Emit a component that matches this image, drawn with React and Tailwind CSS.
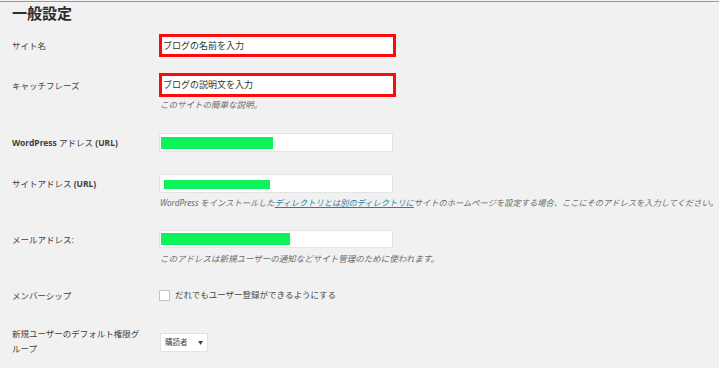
const font = { fontFamily: '"Noto Sans", "Noto Sans CJK JP", sans-serif' };

const Label = ({ children }) => (
  <div className="w-[159px] shrink-0 pl-[12px] text-[8.5px] leading-[15px] font-normal text-[#3f3f3f]">
    {children}
  </div>
);

const RedInput = ({ value }) => (
  <div className="w-[237px] h-full border-[3px] border-[#ff0a0a] bg-white pl-[1px] flex items-center text-[9px] text-[#333]">
    {value}
  </div>
);

const MaskedInput = ({ barClass }) => (
  <div className="w-[234px] h-full border border-[#e4e4e4] bg-white flex items-start">
    <div className={barClass}></div>
  </div>
);

const Desc = ({ children, className = "" }) => (
  <div className={"pl-[160px] leading-[12px] italic text-[#6b6b6b] whitespace-nowrap " + className}>
    {children}
  </div>
);

export default function App() {
  return (
    <div className="w-[719px] h-[368px] bg-[#f1f1f1] overflow-hidden" style={font}>
      <div className="pt-px">
        <div className="h-px bg-[#9a9a9a]"></div>
      </div>

      <h1 className="h-[22px] pl-[12px] text-[15px] leading-[22px] font-semibold text-[#2a2e33]">
        一般設定
      </h1>

      {/* サイト名 */}
      <div className="mt-[10px] h-[23px] flex items-center">
        <Label>サイト名</Label>
        <RedInput value="ブログの名前を入力" />
      </div>

      {/* キャッチフレーズ */}
      <div className="mt-[16px] h-[24px] flex items-center">
        <Label>キャッチフレーズ</Label>
        <RedInput value="ブログの説明文を入力" />
      </div>
      <Desc className="mt-[2px] text-[8.5px]">このサイトの簡単な説明。</Desc>

      {/* WordPress アドレス */}
      <div className="mt-[22px] h-[19px] flex items-center">
        <Label>
          <span className="font-bold">WordPress</span> アドレス <span className="font-bold">(URL)</span>
        </Label>
        <MaskedInput barClass="ml-[1px] mt-[3px] w-[112px] h-[12px] bg-[#0ef35c]" />
      </div>

      {/* サイトアドレス */}
      <div className="mt-[22px] h-[19px] flex items-center">
        <Label>
          サイトアドレス <span className="font-bold">(URL)</span>
        </Label>
        <MaskedInput barClass="ml-[4px] mt-[5px] w-[106px] h-[9px] bg-[#0ef35c]" />
      </div>
      <Desc className="mt-[4px] text-[8.25px]">
        WordPress をインストールした
        <span className="text-[#2a7fa3] underline">ディレクトリとは別のディレクトリに</span>
        サイトのホームページを設定する場合、ここにそのアドレスを入力してください。
      </Desc>

      {/* メールアドレス */}
      <div className="mt-[21px] h-[18px] flex items-center">
        <Label>メールアドレス:</Label>
        <MaskedInput barClass="ml-[1px] mt-[2px] w-[129px] h-[12px] bg-[#0ef35c]" />
      </div>
      <Desc className="mt-[5px] text-[8.5px]">
        このアドレスは新規ユーザーの通知などサイト管理のために使われます。
      </Desc>

      {/* メンバーシップ */}
      <div className="mt-[24px] h-[13px] flex items-center">
        <Label>メンバーシップ</Label>
        <div className="w-[11px] h-[11px] border border-[#c4c4c4] bg-white"></div>
        <span className="ml-[5px] text-[8.5px] text-[#444]">だれでもユーザー登録ができるようにする</span>
      </div>

      {/* デフォルト権限グループ */}
      <div className="mt-[24px] h-[30px] flex items-center">
        <Label>
          新規ユーザーのデフォルト権限グ
          <br />
          ループ
        </Label>
        <div className="ml-px mt-[3px] w-[48px] h-[19px] border border-[#e2e2e2] bg-white flex items-center pl-[4px] text-[7.5px] text-[#444]">
          <span>購読者</span>
          <span className="ml-auto mr-[4px] text-[5px]">▼</span>
        </div>
      </div>
    </div>
  );
}
